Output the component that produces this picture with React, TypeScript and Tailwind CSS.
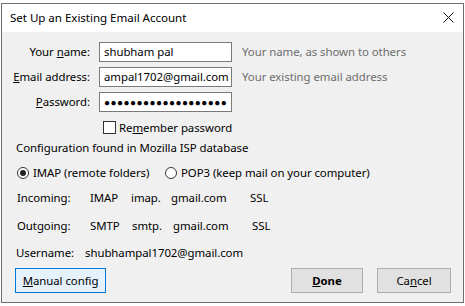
import React from 'react';

const font = { fontFamily: '"Noto Sans", "Open Sans", Arial, sans-serif' };

function Field({ label, value, hint, mono }: { label: React.ReactNode; value: React.ReactNode; hint?: string; mono?: boolean }) {
  return (
    <div className="flex items-center h-[20px]">
      <div className="w-[88px] text-right shrink-0">{label}</div>
      <div className="ml-[9px] w-[133px] h-[20px] shrink-0 border border-[#7a7a7a] bg-white flex items-center pl-[4px] overflow-hidden whitespace-nowrap">
        {mono ? <span className="text-[10px] tracking-[0.45px] leading-none">{value}</span> : value}
      </div>
      {hint && <div className="ml-[10px] text-[#6d6d6d] whitespace-nowrap">{hint}</div>}
    </div>
  );
}

function Radio({ checked, label }: { checked?: boolean; label: string }) {
  return (
    <div className="flex items-center">
      <span className="w-[12px] h-[12px] rounded-full border border-[#333] bg-white flex items-center justify-center">
        {checked && <span className="w-[6px] h-[6px] rounded-full bg-[#222]" />}
      </span>
      <span className="ml-[4px]">{label}</span>
    </div>
  );
}

export default function App() {
  return (
    <div className="w-[465px] h-[306px] bg-white overflow-hidden text-[11.4px] tracking-[-0.05px] text-black" style={font}>
      <div className="ml-px mt-[3px] w-[463px] h-[300px] border border-[#6f6f6f] bg-[#f0f0f0] flex flex-col">
        {/* title bar */}
        <div className="h-[28px] bg-white flex items-center justify-between pl-[8px] pr-[9px]">
          <span className="text-[11.6px]">Set Up an Existing Email Account</span>
          <svg width="11" height="11" viewBox="0 0 11 11" className="mt-[-2px]">
            <path d="M0.5 0.5 L10.5 10.5 M10.5 0.5 L0.5 10.5" stroke="#111" strokeWidth="1" />
          </svg>
        </div>

        <div className="flex flex-col leading-[16px]">
          <div className="mt-[10px] flex flex-col gap-[5px]">
            <Field label={<>Your <u>n</u>ame:</>} value="shubham pal" hint="Your name, as shown to others" />
            <Field label={<><u>E</u>mail address:</>} value="ampal1702@gmail.com" hint="Your existing email address" />
            <Field label={<><u>P</u>assword:</>} value={'●'.repeat(19)} mono />
          </div>

          <div className="mt-[9px] h-[13px] flex items-center ml-[101px]">
            <span className="w-[13px] h-[13px] border border-[#333] bg-white shrink-0" />
            <span className="ml-[3px]">Re<u>m</u>ember password</span>
          </div>

          <div className="mt-[6px] h-[16px] pl-[14px]">Configuration found in Mozilla ISP database</div>

          <div className="mt-[9px] h-[16px] pl-[15px] flex items-center">
            <div className="w-[148px]"><Radio checked label="IMAP (remote folders)" /></div>
            <Radio label="POP3 (keep mail on your computer)" />
          </div>

          <div className="mt-[9px] h-[16px] pl-[15px] flex">
            <span className="w-[73px]">Incoming:</span>
            <span className="w-[41px]">IMAP</span>
            <span className="w-[40px]">imap.</span>
            <span className="w-[79px]">gmail.com</span>
            <span>SSL</span>
          </div>

          <div className="mt-[12px] h-[16px] pl-[15px] flex">
            <span className="w-[73px]">Outgoing:</span>
            <span className="w-[42px]">SMTP</span>
            <span className="w-[41px]">smtp.</span>
            <span className="w-[79px]">gmail.com</span>
            <span>SSL</span>
          </div>

          <div className="mt-[11px] h-[16px] pl-[14px] flex">
            <span className="w-[69px]">Username:</span>
            <span>shubhampal1702@gmail.com</span>
          </div>

          <div className="mt-[7px] h-[25px] flex items-stretch pl-[13px] pr-[12px]">
            <button className="w-[91px] border border-[#0078d7] bg-[#e5f1fb] flex items-center justify-center">
              <span><u>M</u>anual config</span>
            </button>
            <div className="flex-1" />
            <button className="w-[72px] border border-[#adadad] bg-[#e1e1e1] font-bold flex items-center justify-center">
              <span><u>D</u>one</span>
            </button>
            <button className="ml-[14px] w-[74px] border border-[#adadad] bg-[#e1e1e1] flex items-center justify-center">
              <span>Ca<u>n</u>cel</span>
            </button>
          </div>
        </div>
      </div>
    </div>
  );
}
